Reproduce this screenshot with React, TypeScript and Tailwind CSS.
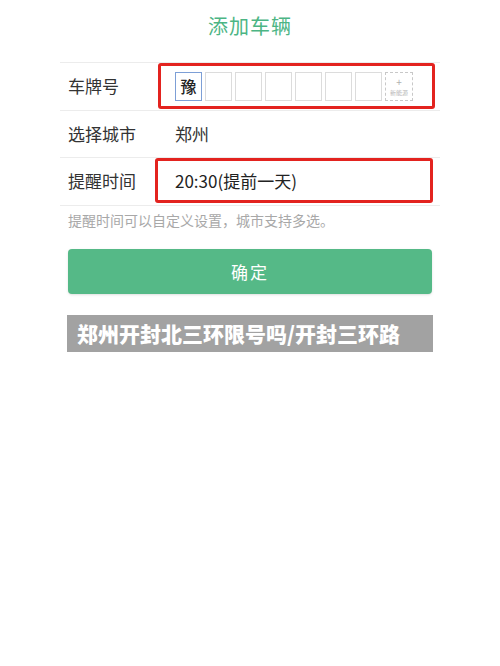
import React from 'react';

const font = { fontFamily: '"Noto Sans CJK SC", "Noto Sans", sans-serif' };

const PlateBoxes: React.FC = () => {
  const empty = [0, 1, 2, 3, 4, 5];
  return (
    <div className="flex items-center gap-[3px]">
      <div className="w-[27px] h-[29px] border-[1.5px] border-[#7d9fd6] flex items-center justify-center text-[16px] text-[#222] font-medium">
        豫
      </div>
      {empty.map((i) => (
        <div key={i} className="w-[27px] h-[29px] border-[1.5px] border-[#dcdcdc]" />
      ))}
      <div className="w-[28px] h-[29px] border border-dashed border-[#c8c8c8] flex flex-col items-center justify-center leading-none">
        <span className="text-[10px] text-[#b0b0b0]">+</span>
        <span className="text-[6px] text-[#b8b8b8] mt-[3px]">新能源</span>
      </div>
    </div>
  );
};

export default function App() {
  return (
    <div className="w-[500px] h-[666px] bg-white" style={font}>
      <div className="w-[380px] mx-auto">
        {/* Header */}
        <div className="h-[62px] flex items-center justify-center pb-[10px]">
          <h1 className="text-[20px] text-[#4cb584] tracking-[1px]">添加车辆</h1>
        </div>

        {/* Form rows */}
        <div className="border-t border-[#ececec]">
          <div className="h-[48px] flex items-start border-b border-[#ececec]">
            <div className="w-[98px] h-[46px] pl-2 flex items-center text-[17px] text-[#333]">车牌号</div>
            <div className="flex-1 mr-[5px] h-[46px] border-[3px] border-[#e3231f] rounded-[3px] pl-[14px] flex items-center">
              <PlateBoxes />
            </div>
          </div>

          <div className="h-[47px] flex items-center border-b border-[#ececec]">
            <div className="w-[115px] pl-2 text-[17px] text-[#333]">选择城市</div>
            <div className="text-[17px] text-[#333]">郑州</div>
          </div>

          <div className="h-[48px] flex items-start border-b border-[#ececec]">
            <div className="w-[95px] h-[45px] pl-2 flex items-center text-[17px] text-[#333]">提醒时间</div>
            <div className="flex-1 mr-[7px] h-[45px] border-[3px] border-[#e3231f] rounded-[3px] pl-[17px] flex items-center text-[17px] text-[#222]">
              20:30(提前一天)
            </div>
          </div>
        </div>

        {/* Hint */}
        <div className="h-[28px] pl-2 flex items-center text-[14px] text-[#a8a8a8]">
          提醒时间可以自定义设置，城市支持多选。
        </div>

        {/* Confirm button */}
        <div className="px-2 mt-[15px]">
          <button className="w-full h-[45px] rounded-[4px] bg-[#55b987] text-white text-[17px] tracking-[2px] shadow-sm">
            确定
          </button>
        </div>

        {/* Caption banner */}
        <div className="mx-[7px] mt-[21px] h-[37px] bg-[#a2a2a2] flex items-center pl-[10px]">
          <span className="text-white text-[21px] font-black leading-none">郑州开封北三环限号吗/开封三环路</span>
        </div>
      </div>
    </div>
  );
}
